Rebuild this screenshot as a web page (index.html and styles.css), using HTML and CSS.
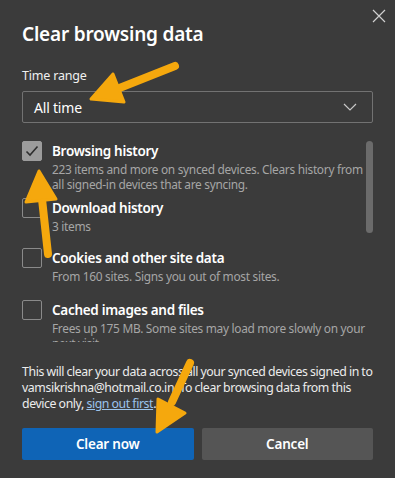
FILE: index.html
```html
<!DOCTYPE html>
<html>
<head>
<meta charset="utf-8">
<link rel="stylesheet" href="styles.css">
</head>
<body>
<div class="dialog">
  <svg class="close" width="14" height="14" viewBox="0 0 14 14"><path d="M1 1L13 13M13 1L1 13" stroke="#d0d0d0" stroke-width="1.2" fill="none"/></svg>
  <h1 class="title">Clear browsing data</h1>
  <div class="label">Time range</div>
  <div class="select">
    <span>All time</span>
    <svg width="14" height="8" viewBox="0 0 14 8"><path d="M1 1L7 7L13 1" stroke="#c8c8c8" stroke-width="1.2" fill="none"/></svg>
  </div>
  <div class="list">
    <div class="items">
      <div class="item">
        <div class="box checked"><svg width="14" height="12" viewBox="0 0 14 12"><path d="M1.5 6.5L5 10L12.5 1.5" stroke="#2e2e2e" stroke-width="1.6" fill="none"/></svg></div>
        <div class="text">
          <div class="name">Browsing history</div>
          <div class="desc">223 items and more on synced devices. Clears history from all signed-in devices that are syncing.</div>
        </div>
      </div>
      <div class="item">
        <div class="box"></div>
        <div class="text">
          <div class="name">Download history</div>
          <div class="desc">3 items</div>
        </div>
      </div>
      <div class="item">
        <div class="box"></div>
        <div class="text">
          <div class="name">Cookies and other site data</div>
          <div class="desc">From 160 sites. Signs you out of most sites.</div>
        </div>
      </div>
      <div class="item">
        <div class="box"></div>
        <div class="text">
          <div class="name">Cached images and files</div>
          <div class="desc">Frees up 175 MB. Some sites may load more slowly on your next visit.</div>
        </div>
      </div>
    </div>
    <div class="scrollbar"></div>
  </div>
  <p class="note">This will clear your data across all your synced devices signed in to vamsikrishna@hotmail.co.in. To clear browsing data from this device only, <a class="link">sign out first</a>.</p>
  <div class="buttons">
    <button class="btn primary">Clear now</button>
    <button class="btn secondary">Cancel</button>
  </div>
  <svg class="arrows" width="395" height="478" viewBox="0 0 395 478">
    <g stroke="#f5a80d" stroke-width="8" stroke-linecap="round" fill="#f5a80d" stroke-linejoin="round">
      <line x1="175" y1="66" x2="117" y2="89"/>
      <polygon points="91,99 124,102 113,74" stroke-width="3"/>
      <line x1="48" y1="254" x2="42" y2="199"/>
      <polygon points="39,171 56,199 26,202" stroke-width="3"/>
      <line x1="190" y1="363" x2="172" y2="402"/>
      <polygon points="157,432 185,413 158,399" stroke-width="3"/>
    </g>
  </svg>
</div>
</body>
</html>
```
FILE: styles.css
```css
* { box-sizing: border-box; }
html, body { margin: 0; padding: 0; }
body {
  background: #3b3b3b;
  font-family: "Noto Sans", "Open Sans", sans-serif;
  color: #ffffff;
  width: 395px;
  height: 478px;
  overflow: hidden;
}
.dialog {
  position: relative;
  padding: 20px 22px 0 22px;
  height: 478px;
}
.close {
  position: absolute;
  right: 9px;
  top: 9px;
}
.title {
  margin: 0;
  font-size: 19px;
  font-weight: 600;
  line-height: 28px;
  letter-spacing: -0.2px;
}
.label {
  margin-top: 19px;
  font-size: 12.5px;
  line-height: 18px;
  color: #f0f0f0;
  letter-spacing: -0.2px;
}
.select {
  margin-top: 6px;
  height: 32px;
  border: 1px solid #727272;
  border-radius: 2px;
  display: flex;
  align-items: center;
  justify-content: space-between;
  padding: 0 15px 0 11px;
  font-size: 14px;
  color: #ffffff;
  letter-spacing: -0.2px;
}
.list {
  position: relative;
  margin-top: 18px;
  height: 201px;
  overflow: hidden;
}
.items {
  display: flex;
  flex-direction: column;
  padding-right: 8px;
}
.item {
  display: flex;
  gap: 10px;
}
.item:nth-child(1) { margin-bottom: 6px; }
.item:nth-child(2) { margin-bottom: 14px; }
.item:nth-child(3) { margin-bottom: 16px; }
.box {
  flex: 0 0 20px;
  width: 20px;
  height: 20px;
  border: 1px solid #8a8a8a;
  border-radius: 2px;
  display: flex;
  align-items: center;
  justify-content: center;
}
.box.checked {
  background: #9c9c9c;
  border-color: #9c9c9c;
}
.text { flex: 1; }
.name {
  font-size: 13.5px;
  font-weight: 600;
  line-height: 20px;
  letter-spacing: -0.3px;
}
.desc {
  font-size: 11.9px;
  line-height: 15px;
  color: #a6a6a6;
  margin-top: 1px;
  letter-spacing: -0.3px;
}
.scrollbar {
  position: absolute;
  right: 0;
  top: 0;
  width: 7px;
  height: 92px;
  border-radius: 4px;
  background: #6b6b6b;
}
.note {
  margin: 22px 0 0 0;
  font-size: 12.3px;
  line-height: 16px;
  color: #ececec;
  letter-spacing: -0.4px;
  word-spacing: -0.3px;
}
.link {
  color: #9cc4ec;
  text-decoration: underline;
}
.buttons {
  margin-top: 16px;
  display: flex;
  gap: 8px;
}
.btn {
  flex: 1;
  height: 32px;
  border: none;
  border-radius: 2px;
  font-family: "Noto Sans", "Open Sans", sans-serif;
  font-size: 13.5px;
  font-weight: 600;
  color: #ffffff;
  letter-spacing: -0.2px;
}
.primary { background: #0f64b6; }
.secondary { background: #555555; }
.arrows {
  position: absolute;
  left: 0;
  top: 0;
  pointer-events: none;
}
```
